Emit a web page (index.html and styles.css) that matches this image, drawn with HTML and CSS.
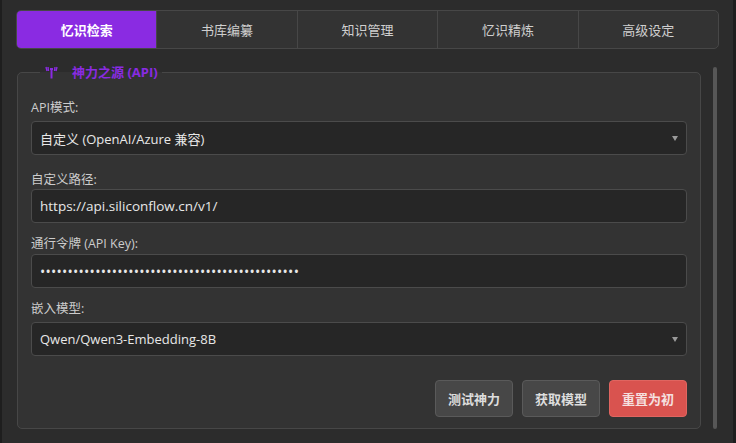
FILE: index.html
```html
<!DOCTYPE html>
<html lang="zh">
<head>
<meta charset="utf-8">
<link rel="stylesheet" href="styles.css">
</head>
<body>
<div class="window">
  <nav class="tabs">
    <div class="tab active">忆识检索</div>
    <div class="tab">书库编纂</div>
    <div class="tab">知识管理</div>
    <div class="tab">忆识精炼</div>
    <div class="tab">高级设定</div>
  </nav>
  <div class="body">
    <fieldset class="group">
      <legend class="legend">
        <svg class="ant" width="15" height="13" viewBox="0 0 15 13">
          <path d="M7.5 3 V12.5" stroke="#8a2be2" stroke-width="2" fill="none"/>
          <path d="M6 3 H9" stroke="#8a2be2" stroke-width="2" fill="none"/>
          <path d="M2 1 L3 5 M4 1 L4.5 5" stroke="#8a2be2" stroke-width="1.4" fill="none"/>
          <path d="M11 1 L10.5 5 M13 1 L12 5" stroke="#8a2be2" stroke-width="1.4" fill="none"/>
        </svg>
        <span>神力之源 (API)</span>
      </legend>

      <label class="lbl first">API模式:</label>
      <div class="field select sel-gap"><span>自定义 (OpenAI/Azure 兼容)</span><span class="arrow"></span></div>

      <label class="lbl l2">自定义路径:</label>
      <div class="field g1">https://api.siliconflow.cn/v1/</div>

      <label class="lbl l3">通行令牌 (API Key):</label>
      <div class="field g2 dots">•••••••••••••••••••••••••••••••••••••••••••••••</div>

      <label class="lbl l4">嵌入模型:</label>
      <div class="field select sel-gap">Qwen/Qwen3-Embedding-8B<span class="arrow"></span></div>

      <div class="actions">
        <button class="btn">测试神力</button>
        <button class="btn">获取模型</button>
        <button class="btn danger">重置为初</button>
      </div>
    </fieldset>
    <div class="scroll"><div class="thumb"></div></div>
  </div>
</div>
</body>
</html>
```
FILE: styles.css
```css
* { box-sizing: border-box; }
html, body { margin: 0; padding: 0; }
body {
  width: 736px;
  height: 443px;
  background: #1e1e1e;
  font-family: "Open Sans", "Noto Sans CJK SC", sans-serif;
  font-size: 13px;
  color: #e0e0e0;
  overflow: hidden;
}
.window {
  margin: 0 3px 0 2px;
  height: 443px;
  background: #2c2c2c;
  padding: 10px 14px 0 14px;
}
.tabs {
  display: flex;
  height: 39px;
  border: 1px solid #474747;
  border-radius: 5px;
  background: #333333;
  overflow: hidden;
}
.tab {
  flex: 1;
  display: flex;
  align-items: center;
  justify-content: center;
  color: #cfcfcf;
  font-size: 13px;
  border-left: 1px solid #474747;
}
.tab:first-child { border-left: none; }
.tab.active {
  background: #8a2be2;
  color: #ffffff;
  font-weight: bold;
}
.body {
  display: flex;
  margin-top: 15px;
}
.group {
  margin: 0 0 0 1px;
  width: 684px;
  height: 365px;
  border: 1px solid #474747;
  border-radius: 5px;
  background: #333333;
  padding: 0 13px 13px 13px;
  min-width: 0;
}
.legend {
  margin-left: 9px;
  padding: 0 4px;
  color: #8a2be2;
  font-weight: bold;
  font-size: 13px;
  line-height: 16px;
  display: flex;
  align-items: center;
  gap: 13px;
}
.ant { display: block; }
.lbl {
  display: block;
  color: #cccccc;
  font-size: 12.5px;
  line-height: 16px;
}
.lbl.first { margin-top: 20px; }
.lbl.l2 { margin-top: 17px; }
.lbl.l3 { margin-top: 13px; }
.lbl.l4 { margin-top: 13px; }
.field {
  position: relative;
  height: 34px;
  border: 1px solid #4b4b4b;
  border-radius: 4px;
  background: #262626;
  padding: 0 8px;
  display: flex;
  align-items: center;
  font-size: 13.5px;
  color: #e8e8e8;
}
.field.select { font-size: 13px; }
.sel-gap { margin-top: 5px; }
.g1 { margin-top: 1px; }
.g2 { margin-top: 2px; }
.dots { font-size: 14px; letter-spacing: 0.25px; }
.arrow {
  position: absolute;
  right: 8px;
  top: 14px;
  width: 0;
  height: 0;
  border-left: 3.5px solid transparent;
  border-right: 3.5px solid transparent;
  border-top: 5px solid #9a9a9a;
}
.actions {
  display: flex;
  justify-content: flex-end;
  gap: 9px;
  margin-top: 24px;
}
.btn {
  width: 78px;
  height: 37px;
  border: 1px solid #5a5a5a;
  border-radius: 4px;
  background: #474747;
  color: #dddddd;
  font-family: "Open Sans", "Noto Sans CJK SC", sans-serif;
  font-weight: bold;
  font-size: 13px;
}
.btn.danger {
  background: #d9534f;
  border-color: #e06560;
  color: #f5e0e0;
}
.scroll {
  margin-left: 12px;
  margin-top: -15px;
  width: 4px;
}
.thumb {
  margin-top: 18px;
  height: 362px;
  width: 4px;
  border-radius: 2px;
  background: #575757;
}
```
